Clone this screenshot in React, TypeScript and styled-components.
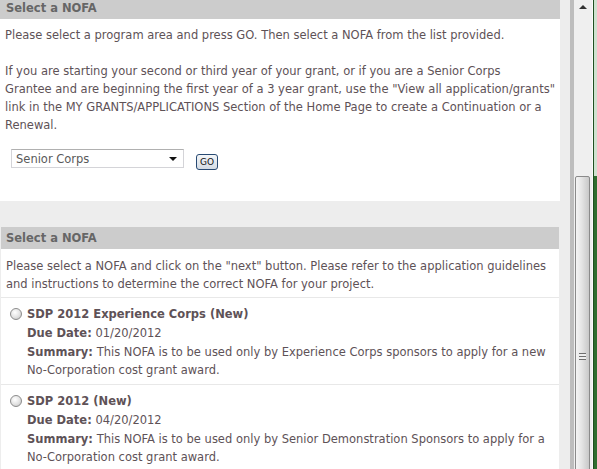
import React from "react";
import styled, { createGlobalStyle } from "styled-components";

const Global = createGlobalStyle`
  html, body { margin: 0; padding: 0; background: #ededed; }
  body { font-family: "DejaVu Sans", Verdana, sans-serif; }
`;

const Frame = styled.div`
  display: flex;
  align-items: flex-start;
  width: 597px;
  height: 469px;
  overflow: hidden;
  background: #ededed;
`;

const Column = styled.div`
  width: 560px;
  flex: none;
  margin-top: -3px;
  display: flex;
  flex-direction: column;
  & > * {
    flex: none;
  }
`;

const Gutter = styled.div`
  width: 10px;
  height: 469px;
  flex: none;
  background: #ededed;
`;

const Divider = styled.div`
  width: 4px;
  height: 469px;
  flex: none;
  background: #bdbdbd;
`;

const Scrollbar = styled.div`
  position: relative;
  width: 19px;
  height: 469px;
  flex: none;
  background: #efefef;
  border-right: 1px solid #fafafa;
  box-sizing: border-box;
  overflow: hidden;
`;

const UpArrow = styled.div`
  position: absolute;
  left: 5px;
  top: 5px;
  width: 0;
  height: 0;
  border-left: 4px solid transparent;
  border-right: 4px solid transparent;
  border-bottom: 4px solid #333;
`;

const Thumb = styled.div`
  position: absolute;
  left: 1px;
  top: 176px;
  width: 15px;
  height: 320px;
  box-sizing: border-box;
  border: 1px solid #8a8a8a;
  border-radius: 2px;
  background: linear-gradient(to right, #f4f4f4 0%, #e6e6e6 40%, #c8c8c8 100%);
  display: flex;
  justify-content: center;
  padding-top: 176px;
`;

const Grip = styled.div`
  width: 7px;
  height: 7px;
  background: repeating-linear-gradient(
    to bottom,
    #6e6e6e 0px,
    #6e6e6e 1px,
    #eeeeee 1px,
    #eeeeee 3px
  );
`;

const Edge = styled.div`
  width: 4px;
  height: 469px;
  flex: none;
  border-left: 1px solid #1f4f1f;
  box-sizing: border-box;
  background: linear-gradient(to bottom, #cfe2cf 0px, #cfe2cf 176px, #2f6e2f 176px);
`;

const Header = styled.div<{ $inset?: boolean }>`
  height: 22px;
  line-height: 22px;
  background: #cccccc;
  color: #666666;
  font-weight: bold;
  font-size: 11.5px;
  padding-left: ${(p) => (p.$inset ? 5 : 6)}px;
  margin: 0 ${(p) => (p.$inset ? 1 : 0)}px;
`;

const Panel = styled.div`
  background: #ffffff;
  color: #5e5257;
  font-size: 11.5px;
  line-height: 18px;
`;

const IntroBody = styled.div`
  padding: 7px 5px 0 5px;
  height: 182px;
  box-sizing: border-box;
`;

const Para = styled.p<{ $last?: boolean }>`
  margin: 0 0 ${(p) => (p.$last ? 0 : 18)}px 0;
`;

const Controls = styled.div`
  display: flex;
  align-items: flex-start;
  gap: 12px;
  padding: 15px 0 0 6px;
`;

const SelectBox = styled.div`
  width: 173px;
  height: 19px;
  box-sizing: border-box;
  border: 1px solid #d4d4d8;
  border-top-color: #b0b0b0;
  background: #fff;
  display: flex;
  align-items: center;
  justify-content: space-between;
  padding: 0 6px 0 4px;
  font-size: 11.5px;
  color: #5a5a5a;
`;

const Caret = styled.span`
  width: 0;
  height: 0;
  border-left: 4px solid transparent;
  border-right: 4px solid transparent;
  border-top: 4px solid #111;
`;

const GoButton = styled.button`
  margin-top: 5px;
  width: 22px;
  height: 16px;
  padding: 0;
  box-sizing: border-box;
  border: 1px solid #284a73;
  border-radius: 3px;
  background: linear-gradient(to bottom, #f4f6f8, #d3dbe4);
  font-family: "DejaVu Sans", Verdana, sans-serif;
  font-size: 9px;
  color: #111;
  line-height: 14px;
`;

const Spacer = styled.div`
  height: 26px;
  background: #ededed;
`;

const ListPanel = styled(Panel)`
  margin: 0 1px;
`;

const Instructions = styled.div`
  padding: 8px 5px 4px 5px;
  border-bottom: 1px solid #e8e8e8;
`;

const Item = styled.div`
  position: relative;
  padding: 6px 5px 5px 26px;
  border-bottom: 1px solid #e8e8e8;
`;

const Radio = styled.span`
  position: absolute;
  left: 9px;
  top: 10px;
  width: 12px;
  height: 12px;
  box-sizing: border-box;
  border-radius: 50%;
  border: 1px solid #8c8c8c;
  background: radial-gradient(circle at 40% 35%, #ffffff 0%, #e2e2e2 55%, #bdbdbd 100%);
`;

const Title = styled.div`
  font-weight: bold;
  font-size: 11.5px;
  line-height: 20px;
`;

const Line = styled.div`
  line-height: 19px;
  & + & {
    line-height: 18px;
  }
`;

const Label = styled.b`
  font-weight: bold;
`;

const items = [
  {
    title: "SDP 2012 Experience Corps (New)",
    due: "01/20/2012",
    lines: [
      "This NOFA is to be used only by Experience Corps sponsors to apply for a new",
      "No-Corporation cost grant award.",
    ],
  },
  {
    title: "SDP 2012 (New)",
    due: "04/20/2012",
    lines: [
      "This NOFA is to be used only by Senior Demonstration Sponsors to apply for a",
      "No-Corporation cost grant award.",
    ],
  },
];

export default function App() {
  return (
    <>
      <Global />
      <Frame>
        <Column>
          <Header>Select a NOFA</Header>
          <Panel>
            <IntroBody>
              <Para>
                Please select a program area and press GO. Then select a NOFA from the list provided.
              </Para>
              <Para $last>
                If you are starting your second or third year of your grant, or if you are a Senior Corps
                <br />
                Grantee and are beginning the first year of a 3 year grant, use the "View all application/grants"
                <br />
                link in the MY GRANTS/APPLICATIONS Section of the Home Page to create a Continuation or a
                <br />
                Renewal.
              </Para>
              <Controls>
                <SelectBox>
                  <span>Senior Corps</span>
                  <Caret />
                </SelectBox>
                <GoButton>GO</GoButton>
              </Controls>
            </IntroBody>
          </Panel>
          <Spacer />
          <Header $inset>Select a NOFA</Header>
          <ListPanel>
            <Instructions>
              Please select a NOFA and click on the "next" button. Please refer to the application guidelines
              <br />
              and instructions to determine the correct NOFA for your project.
            </Instructions>
            {items.map((it) => (
              <Item key={it.title}>
                <Radio />
                <Title>{it.title}</Title>
                <Line>
                  <Label>Due Date:</Label> {it.due}
                </Line>
                <Line>
                  <Label>Summary:</Label> {it.lines[0]}
                  <br />
                  {it.lines[1]}
                </Line>
              </Item>
            ))}
          </ListPanel>
        </Column>
        <Gutter />
        <Divider />
        <Scrollbar>
          <UpArrow />
          <Thumb>
            <Grip />
          </Thumb>
        </Scrollbar>
        <Edge />
      </Frame>
    </>
  );
}
